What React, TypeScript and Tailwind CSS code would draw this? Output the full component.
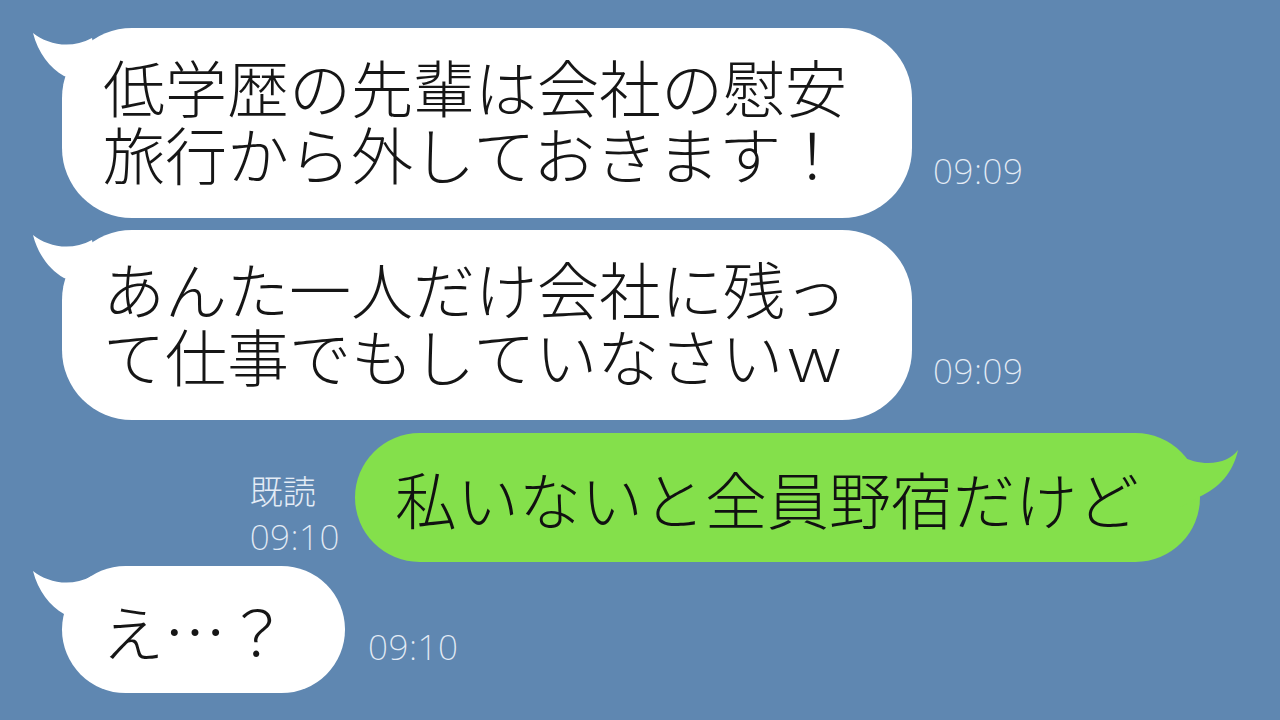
import React from 'react';

const jp = { fontFamily: '"Noto Sans CJK JP", "Noto Sans", sans-serif' };
const time = { fontFamily: '"Noto Sans", "Noto Sans CJK JP", sans-serif' };

function LeftTail() {
  return (
    <svg className="absolute left-0 top-0 overflow-visible" width="1" height="1">
      <path d="M -29 5 C -15 16, 8 22, 30 10 L 40 60 L 2 48 C -12 40, -24 25, -29 5 Z" fill="#ffffff" />
    </svg>
  );
}

function RightTail() {
  return (
    <svg className="absolute right-0 top-0 overflow-visible" width="1" height="1">
      <path d="M 39 17 C 30 30, 5 36, -20 22 L -20 75 L 0 64 C 20 55, 34 40, 39 17 Z" fill="#84e04b" />
    </svg>
  );
}

function Stamp({ children, className = '' }: { children: React.ReactNode; className?: string }) {
  return (
    <div className={`text-[35px] leading-none font-extralight text-[#e4ecf6] tracking-[0.5px] ${className}`} style={time}>
      {children}
    </div>
  );
}

function Incoming({ lines, w, h, stampMb }: { lines: [string, string]; w: number; h: number; stampMb: string }) {
  return (
    <div className="flex items-end">
      <div
        className="relative bg-white rounded-[70px] flex items-center pl-[41px] pb-[6px] text-[62px] leading-[67px] font-light text-[#161616]"
        style={{ ...jp, width: w, height: h }}
      >
        <LeftTail />
        <p className="relative whitespace-nowrap">
          {lines[0]}
          <br />
          {lines[1]}
        </p>
      </div>
      <Stamp className={`ml-[21px] ${stampMb}`}>09:09</Stamp>
    </div>
  );
}

export default function App() {
  return (
    <div className="w-[1280px] h-[720px] bg-[#5f87b1] overflow-hidden pl-[62px] pt-[28px] flex flex-col">
      <Incoming lines={['低学歴の先輩は会社の慰安', '旅行から外しておきます！']} w={850} h={190} stampMb="mb-[30px]" />
      <div className="mt-[12px]">
        <Incoming lines={['あんた一人だけ会社に残っ', 'て仕事でもしていなさいｗ']} w={850} h={190} stampMb="mb-[32px]" />
      </div>

      <div className="mt-[13px] flex items-end justify-end pr-[80px]">
        <div className="flex flex-col items-start mr-[15px] mb-[8px] gap-[12px]">
          <div className="text-[33px] leading-none font-extralight text-[#e4ecf6]" style={jp}>既読</div>
          <Stamp>09:10</Stamp>
        </div>
        <div
          className="relative bg-[#84e04b] rounded-full w-[845px] h-[129px] flex items-center pl-[40px] text-[62px] leading-none font-light text-[#111111]"
          style={jp}
        >
          <RightTail />
          <span className="relative whitespace-nowrap">私いないと全員野宿だけど</span>
        </div>
      </div>

      <div className="mt-[4px] flex items-end">
        <div
          className="relative bg-white rounded-full w-[283px] h-[127px] flex items-center pl-[40px] text-[62px] leading-none font-light text-[#161616]"
          style={jp}
        >
          <LeftTail />
          <span className="relative whitespace-nowrap">え…？</span>
        </div>
        <Stamp className="ml-[23px] mb-[29px]">09:10</Stamp>
      </div>
    </div>
  );
}
